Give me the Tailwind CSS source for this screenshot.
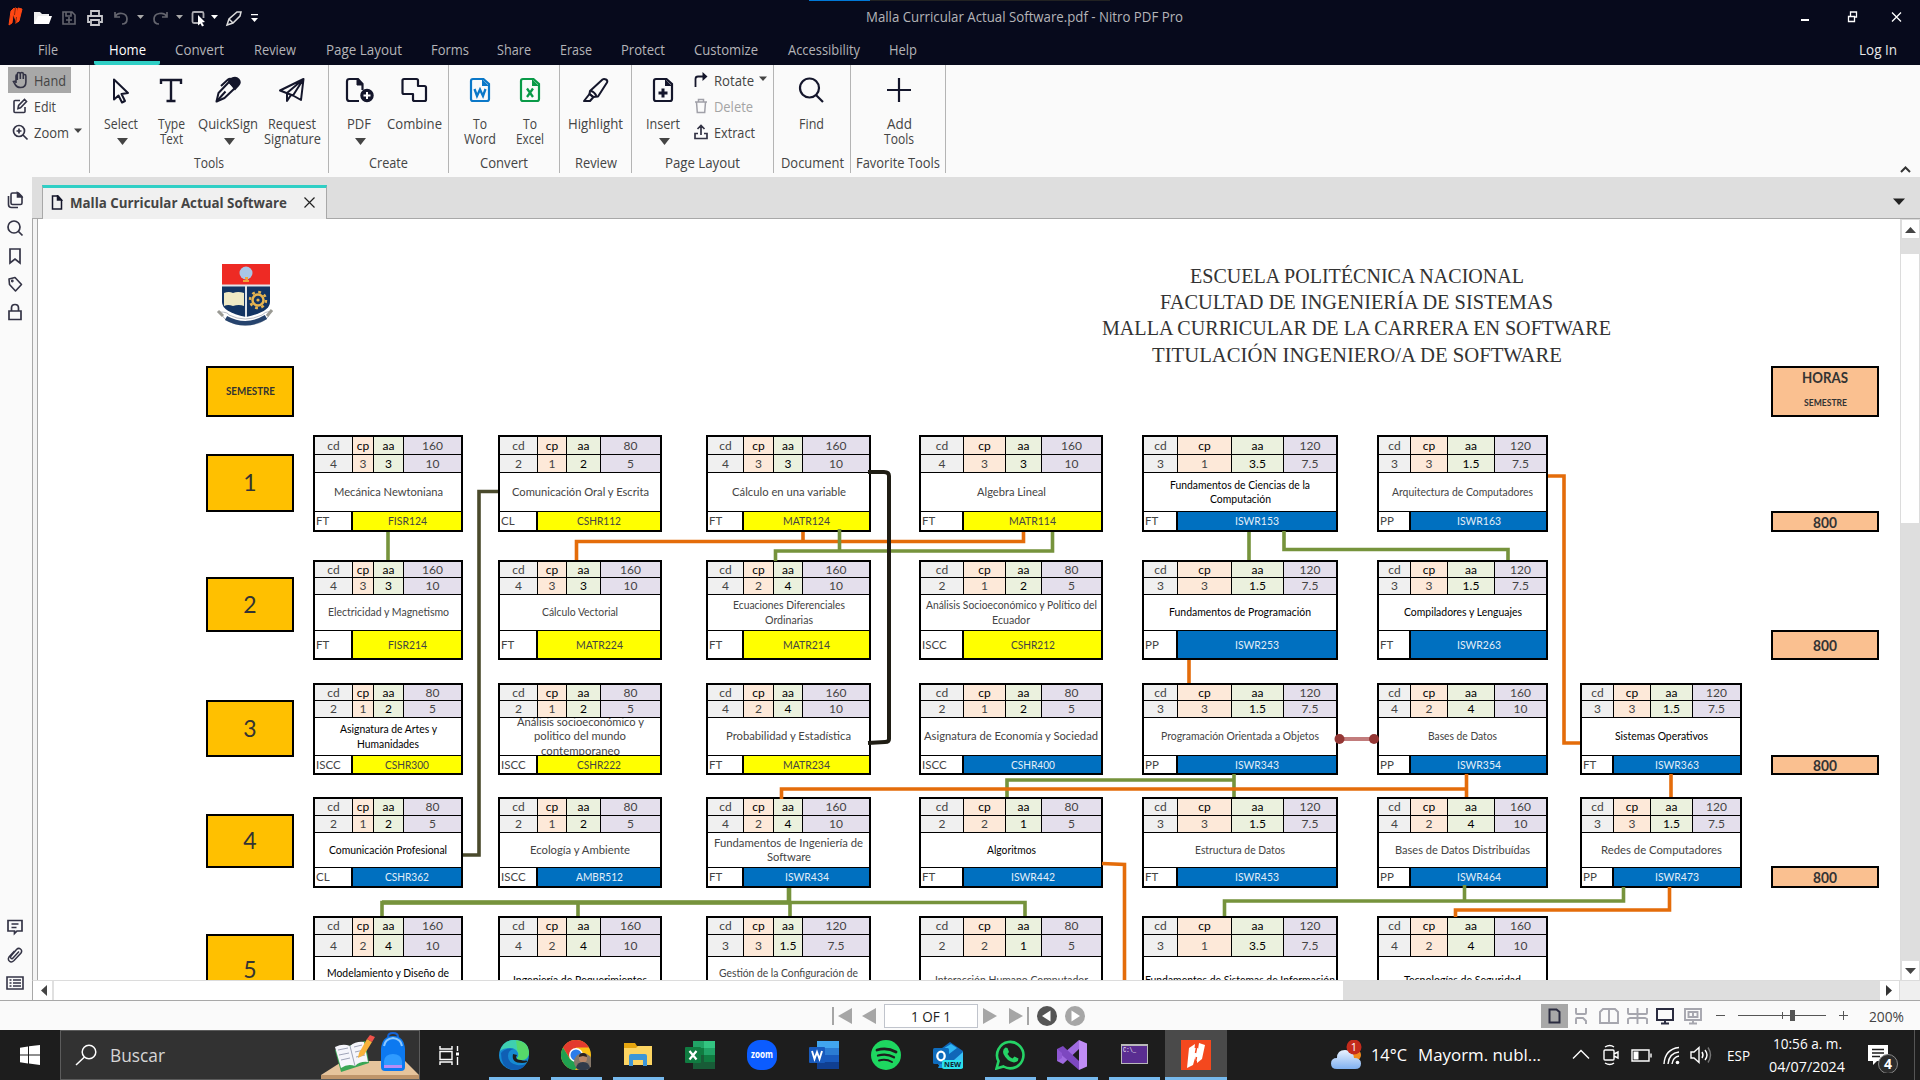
<!DOCTYPE html>
<html lang="es">
<head>
<meta charset="utf-8">
<title>Malla Curricular Actual Software.pdf - Nitro PDF Pro</title>
<script src="https://cdn.jsdelivr.net/npm/@tailwindcss/browser@4"></script>
</head>
<body class="w-[1920px] h-[1080px] overflow-hidden flex flex-col bg-[#fafafa] text-[#444] text-[14px] font-['Open_Sans','Noto_Sans',sans-serif] whitespace-nowrap">

<!-- Title bar -->
<header class="h-[65px] shrink-0 bg-[#070a1c] text-[#b4b4b8] flex flex-col relative">
  <div class="absolute left-[809px] top-0 h-px w-[61px] bg-[#0078d7]"></div>
  <div class="absolute left-[870px] top-0 h-px w-[240px] bg-[#222]"></div>
  <div class="h-[35px] flex items-center relative">
    <svg class="w-[270px] h-[35px]" viewBox="0 0 270 35" fill="none">
      <path d="M11 11l3-3-2 15-3 2zM18 8l4 1-3 12-3 2z" fill="#ff4713" stroke="#ff4713"/><path d="M14 8l3 0 2 14-3 0-3-7z" fill="#ff4713"/><path d="M15.500 7l-1 8M16.500 17l-1 7" stroke="#8a2408"/>
      <path d="M34 24V12h6l2 2h7v3" fill="#eee"/><path d="M34 24l4-8h14l-3 8z" fill="#fff"/>
      <g stroke="#64656e" stroke-width="1.6"><path d="M63 12h9l3 3v9H63zM66 12v4h5v-4M66 20h6M69 17v6"/></g>
      <g stroke="#c8c8cc" stroke-width="1.8"><path d="M91 15v-4h8v4M90 22h-2v-6h14v6h-2M91 20h8v5h-8z"/></g>
      <g stroke="#64656e" stroke-width="1.7"><path d="M115 12v5h5M115 17c3-6 12-4 12 2 0 3-2 5-5 5M167 12v5h-5M167 17c-3-6-13-4-13 2 0 3 2 5 5 5"/></g>
      <path d="M137 15h7l-3.500 4zM176 15h7l-3.500 4z" fill="#aaa"/>
      <path d="M198 23h-4a1.500 1.500 0 0 1-1.500-1.500v-8A1.500 1.500 0 0 1 194 12h8a1.500 1.500 0 0 1 1.500 1.500V18" stroke="#aaaab0" stroke-width="1.800"/><path d="M198 15l7 7-3 .5 2 3-2 1-1.500-3-2.500 2z" fill="#fff"/>
      <path d="M211 15h7l-3.500 4z" fill="#fff"/>
      <g stroke="#ddd" stroke-width="1.500"><path d="M227 25l2-6 8-7 4 0-1 4-7 7zM229 19l4 4"/></g>
      <path d="M251 14h7v1.200h-7zM251 18h7l-3.500 4z" fill="#fff"/>
    </svg>
    <div class="ml-[596px] mb-[2px]"><span data-w="317">Malla Curricular Actual Software.pdf - Nitro PDF Pro</span></div>
    <svg class="ml-auto w-[130px] h-[35px]" viewBox="0 0 130 35" fill="none" stroke="#fff">
      <path d="M11 20h8" stroke-width="2"/><path d="M58.500 16.500h6v5h-6zM60.500 16v-4h6v5h-2" stroke-width="1.300"/><path d="M102 12.500l9 9M111 12.500l-9 9" stroke-width="1.300"/>
    </svg>
  </div>
  <nav class="h-[30px] flex pl-[23px]">
    <div class="px-[14.5px] pt-[4px]"><span data-w="20">File</span></div>
    <div class="px-[14.5px] pt-[4px] ml-[22px] border-b-4 border-[#2fcfc5] rounded-b-[2px] text-white"><span data-w="37">Home</span></div>
    <div class="px-[14.5px] pt-[4px]"><span data-w="49">Convert</span></div>
    <div class="px-[14.5px] pt-[4px] ml-px"><span data-w="42">Review</span></div>
    <div class="px-[14.5px] pt-[4px] ml-px"><span data-w="76">Page Layout</span></div>
    <div class="px-[14.5px] pt-[4px]"><span data-w="38">Forms</span></div>
    <div class="px-[14.5px] pt-[4px] -ml-px"><span data-w="34">Share</span></div>
    <div class="px-[14.5px] pt-[4px]"><span data-w="32">Erase</span></div>
    <div class="px-[14.5px] pt-[4px]"><span data-w="44">Protect</span></div>
    <div class="px-[14.5px] pt-[4px]"><span data-w="64">Customize</span></div>
    <div class="px-[14.5px] pt-[4px] ml-px"><span data-w="72">Accessibility</span></div>
    <div class="px-[14.5px] pt-[4px]"><span data-w="28">Help</span></div>
    <div class="ml-auto mr-[23px] pt-[4px] text-[#e8e8e8]"><span data-w="38">Log In</span></div>
  </nav>
</header>

<!-- Ribbon -->
<section class="h-[112px] shrink-0 flex relative leading-[15px]">
  <div class="w-[89px] pl-[8px] pt-[2px] flex flex-col">
    <div class="w-[63px] h-[26px] bg-[#a8a8a8] flex items-center pl-[4px] gap-[5px]">
      <svg class="w-[17px] h-[18px]" viewBox="0 0 17 18" fill="none" stroke="#333345" stroke-width="1.600"><path d="M4 12V5q0-1.500 1.300-1.500M5.300 9V3q0-1.500 1.500-1.500T8.300 3v5M8.300 3q0-1.500 1.500-1.500T11.300 3v5M11.300 4.500q0-1 1.300-1t1.300 1.500v6q0 5.500-5.400 5.500Q5 16.500 3.500 14L1.500 10.500 3.800 10"/></svg><span data-w="32">Hand</span></div>
    <div class="h-[26px] flex items-center pl-[4px] gap-[5px]">
      <svg class="w-[17px] h-[18px]" viewBox="0 0 17 18" fill="none" stroke="#333345" stroke-width="1.600"><path d="M8 3.500H3Q2 3.500 2 4.500v10q0 1 1 1h9q1 0 1-1V10M6 11.500l.6-3L12.500 2.500l2 2-6 6.200z"/></svg><span data-w="22">Edit</span></div>
    <div class="h-[26px] flex items-center pl-[4px] gap-[5px]">
      <svg class="w-[17px] h-[18px]" viewBox="0 0 17 18" fill="none" stroke="#333345" stroke-width="1.700"><circle cx="7" cy="8" r="5.500"/><path d="M11 12l4.500 4.500M4.500 8h5M7 5.500v5"/></svg><span data-w="35">Zoom</span>
      <svg class="w-[8px] h-[5px] -mt-[3px]" viewBox="0 0 8 5"><path d="M0 .5h8L4 5z" fill="#444"/></svg></div>
  </div>

  <div class="w-px h-[108px] bg-[#b4b4b4]"></div>
  <div class="w-[238px] flex flex-col items-center">
    <div class="h-[90px] w-full pl-[4px] flex text-center">
      <div class="w-[53px] flex flex-col items-center pt-[10px]"><svg class="w-[30px] h-[30px] mb-[11px]" viewBox="0 0 30 30" fill="none" stroke="#14162b" stroke-width="2"><path d="M8 4.500v20l4.500-4 3.500 7 3-1.500-3.500-7 6.500-1z" stroke-linejoin="round"/></svg><span data-w="34">Select</span><svg class="w-[11px] h-[7px] mt-[7px] ml-[3px]" viewBox="0 0 11 7"><path d="M0 0h11L5.500 7z" fill="#444"/></svg></div>
      <div class="w-[48px] flex flex-col items-center pt-[10px]"><svg class="w-[30px] h-[30px] mb-[11px]" viewBox="0 0 30 30" fill="none" stroke="#14162b" stroke-width="2.400"><path d="M5 9V5h20v4M15 5v21M10.500 26h9"/></svg><span data-w="27">Type</span><span data-w="23">Text</span></div>
      <div class="w-[66px] flex flex-col items-center pt-[10px]"><svg class="w-[30px] h-[30px] mb-[11px]" viewBox="0 0 30 30" fill="none" stroke="#14162b" stroke-width="2"><path d="M3.500 26.500L5.500 18 16 7l6 6-10.500 10z" stroke-linejoin="round"/><path d="M3.500 26.500l9-10M8 11l7-6.500q2-1.500 4 0"/><path d="M16 6l3-2.500q4-2 6.500 1t0 5.500L22 14z" fill="#14162b"/></svg><span data-w="60">QuickSign</span><svg class="w-[11px] h-[7px] mt-[7px] ml-[2px]" viewBox="0 0 11 7"><path d="M0 0h11L5.500 7z" fill="#444"/></svg></div>
      <div class="w-[62px] flex flex-col items-center pt-[10px]"><svg class="w-[30px] h-[30px] mb-[11px]" viewBox="0 0 30 30" fill="none" stroke="#14162b" stroke-width="2" stroke-linejoin="round"><path d="M3 15.500L26.500 4 24 25l-8-4.500zM10 18L26.500 4 16 20.500M10 18v8l4-6"/></svg><span data-w="48">Request</span><span data-w="57">Signature</span></div>
    </div>
    <span data-w="30">Tools</span>
  </div>

  <div class="w-px h-[108px] bg-[#b4b4b4]"></div>
  <div class="w-[119px] flex flex-col items-center">
    <div class="h-[90px] w-full pl-[5px] flex">
      <div class="w-[50px] flex flex-col items-center pt-[10px]"><svg class="w-[30px] h-[30px] mb-[11px]" viewBox="0 0 30 30" fill="none" stroke="#14162b" stroke-width="2.200"><path d="M15 26H5.500Q3 26 3 23.500V6.500Q3 4 5.500 4H14l4.500 5v6"/><path d="M13 4l6 6h-6z" fill="#14162b" stroke-width="1"/><circle cx="23" cy="20.500" r="6" fill="#14162b" stroke-width="1.500"/><path d="M19.500 20.500h7M23 17v7" stroke="#fff" stroke-width="2"/></svg><span data-w="24">PDF</span><svg class="w-[11px] h-[7px] mt-[7px] ml-[3px]" viewBox="0 0 11 7"><path d="M0 0h11L5.500 7z" fill="#444"/></svg></div>
      <div class="w-[60px] flex flex-col items-center pt-[10px]"><svg class="w-[30px] h-[30px] mb-[11px]" viewBox="0 0 30 30" fill="none" stroke="#14162b" stroke-width="2.200" stroke-linejoin="round"><path d="M5 4h12.500q1.500 0 1.500 1.500V11h6.500Q27 11 27 12.500v12q0 1.500-1.500 1.500h-10q-1.500 0-1.500-1.500V19H5q-1.500 0-1.500-1.500v-12Q3.500 4 5 4z"/></svg><span data-w="55">Combine</span></div>
    </div>
    <span data-w="39">Create</span>
  </div>

  <div class="w-px h-[108px] bg-[#b4b4b4]"></div>
  <div class="w-[110px] flex flex-col items-center">
    <div class="h-[90px] w-full pl-[6px] flex">
      <div class="w-[50px] flex flex-col items-center pt-[10px]"><svg class="w-[30px] h-[30px] mb-[11px]" viewBox="0 0 30 30" fill="none" stroke="#0b78c8" stroke-width="2.200"><path d="M8 4h10.500L24 9v15q0 2-2 2H8q-2 0-2-2V6q0-2 2-2z"/><path d="M17 4l7 7h-7z" fill="#0b78c8" stroke="none"/><path d="M9.500 14l2.500 7 3-6.500 3 6.500 2.500-7" stroke-width="2.300"/></svg><span data-w="14">To</span><span data-w="32">Word</span></div>
      <div class="w-[50px] flex flex-col items-center pt-[10px]"><svg class="w-[30px] h-[30px] mb-[11px]" viewBox="0 0 30 30" fill="none" stroke="#0a9a48" stroke-width="2.200"><path d="M8 4h10.500L24 9v15q0 2-2 2H8q-2 0-2-2V6q0-2 2-2z"/><path d="M17 4l7 7h-7z" fill="#0a9a48" stroke="none"/><path d="M12 13.500l6 8.500M18 13.500L12 22" stroke-width="2.300"/></svg><span data-w="14">To</span><span data-w="28">Excel</span></div>
    </div>
    <span data-w="48">Convert</span>
  </div>

  <div class="w-px h-[108px] bg-[#b4b4b4]"></div>
  <div class="w-[71px] flex flex-col items-center">
    <div class="h-[90px] flex flex-col items-center pt-[10px]"><svg class="w-[30px] h-[30px] mb-[11px]" viewBox="0 0 30 30" fill="none" stroke="#14162b" stroke-width="2" stroke-linejoin="round"><path d="M9 16L21.500 4.500q1.500-1 3.500 0t1 3L17 21.500l-5 .5-3.500-3z"/><path d="M10 16q3 .5 5.500 5M8.500 19L3 26h6l3.500-4z"/></svg><span data-w="55">Highlight</span></div>
    <span data-w="42">Review</span>
  </div>

  <div class="w-px h-[108px] bg-[#b4b4b4]"></div>
  <div class="w-[141px] flex flex-col items-center">
    <div class="h-[90px] w-full pl-[6px] flex">
      <div class="w-[50px] flex flex-col items-center pt-[10px]"><svg class="w-[30px] h-[30px] mb-[11px]" viewBox="0 0 30 30" fill="none" stroke="#14162b" stroke-width="2.200"><path d="M8 4h10.500L24 9v15q0 2-2 2H8q-2 0-2-2V6q0-2 2-2z"/><path d="M17 4l7 7h-7z" fill="#14162b" stroke="none"/><path d="M10.500 18h9M15 13.500v9" stroke-width="3"/></svg><span data-w="34">Insert</span><svg class="w-[11px] h-[7px] mt-[7px] ml-[3px]" viewBox="0 0 11 7"><path d="M0 0h11L5.500 7z" fill="#444"/></svg></div>
      <div class="flex flex-col pt-[2px] pl-[5px]">
        <div class="h-[26px] flex items-center gap-[5px]"><svg class="w-[16px] h-[16px]" viewBox="0 0 16 16" fill="none" stroke="#14162b" stroke-width="1.800"><path d="M2.500 15V7q0-2.500 2.500-2.500h5"/><path d="M9.500 0l5 4.500-5 4.500z" fill="#14162b" stroke="none"/></svg><span data-w="40">Rotate</span><svg class="w-[8px] h-[5px] -mt-[3px]" viewBox="0 0 8 5"><path d="M0 .5h8L4 5z" fill="#444"/></svg></div>
        <div class="h-[26px] flex items-center gap-[5px] text-[#a4a4a4]"><svg class="w-[16px] h-[16px]" viewBox="0 0 16 16" fill="none" stroke="#a0a0a8" stroke-width="1.500"><path d="M2 4h12M5.500 4V1.500h5V4M3.500 4l.8 10.500h7.400L12.500 4"/></svg><span data-w="39">Delete</span></div>
        <div class="h-[26px] flex items-center gap-[5px]"><svg class="w-[16px] h-[16px]" viewBox="0 0 16 16" fill="none" stroke="#333345" stroke-width="1.700"><path d="M8 11V1.500M4.500 5L8 1.500 11.500 5M5 9.500H2v5h12v-5h-3"/></svg><span data-w="41">Extract</span></div>
      </div>
    </div>
    <span data-w="75">Page Layout</span>
  </div>

  <div class="w-px h-[108px] bg-[#b4b4b4]"></div>
  <div class="w-[76px] flex flex-col items-center">
    <div class="h-[90px] flex flex-col items-center pt-[10px] pr-[2px]"><svg class="w-[30px] h-[30px] mb-[11px]" viewBox="0 0 30 30" fill="none" stroke="#14162b" stroke-width="2.200"><circle cx="13.500" cy="13" r="9.500"/><path d="M20 20l7 7"/></svg><span data-w="25">Find</span></div>
    <span data-w="63">Document</span>
  </div>

  <div class="w-px h-[108px] bg-[#b4b4b4]"></div>
  <div class="w-[94px] flex flex-col items-center">
    <div class="h-[90px] flex flex-col items-center pt-[10px] pl-[2px]"><svg class="w-[30px] h-[30px] mb-[11px]" viewBox="0 0 30 30" stroke="#14162b" stroke-width="2.200"><path d="M3 15h24M15 3v24"/></svg><span data-w="25">Add</span><span data-w="30">Tools</span></div>
    <span data-w="84">Favorite Tools</span>
  </div>
  <div class="w-px h-[108px] bg-[#b4b4b4]"></div>
  <svg class="ml-auto mr-[9px] mt-[101px] w-[11px] h-[7px]" viewBox="0 0 11 7" fill="none" stroke="#333" stroke-width="2"><path d="M1 6l4.500-4.500L10 6"/></svg>
</section>

<!-- Work area -->
<main class="h-[823px] shrink-0 flex">
  <aside class="w-[32px] flex flex-col items-center pt-[14px] text-[#333345]">
    <div class="flex flex-col gap-[10px] pr-[3px]">
      <svg class="w-[18px] h-[18px]" viewBox="0 0 18 18" fill="none" stroke="currentColor" stroke-width="1.600"><path d="M6.500 2h6L16 5.500V12q0 1.500-1.500 1.500h-8Q5 13.500 5 12V3.500Q5 2 6.500 2z"/><path d="M11.500 2v4h4z" fill="currentColor"/><path d="M2.500 5v8.500q0 3 3 3H12"/></svg>
      <svg class="w-[18px] h-[18px]" viewBox="0 0 18 18" fill="none" stroke="currentColor" stroke-width="1.700"><circle cx="8" cy="8" r="6"/><path d="M12 12l4.500 4.500"/></svg>
      <svg class="w-[18px] h-[18px]" viewBox="0 0 18 18" fill="none" stroke="currentColor" stroke-width="1.700"><path d="M4 2h10v14l-5-4-5 4z"/></svg>
      <svg class="w-[18px] h-[18px]" viewBox="0 0 18 18" fill="none" stroke="currentColor" stroke-width="1.600" stroke-linejoin="round"><path d="M3 4l6-1.500 6.500 7-6 6.500L3.500 9.500z"/><circle cx="6.300" cy="6" r=".6"/></svg>
      <svg class="w-[18px] h-[18px]" viewBox="0 0 18 18" fill="none" stroke="currentColor" stroke-width="1.700"><path d="M3 8h12v8.500H3zM5.500 8V5q0-3.500 3.500-3.500T12.500 5v3"/></svg>
    </div>
    <div class="flex flex-col gap-[10px] mt-auto mb-[8px] pr-[2px]">
      <svg class="w-[18px] h-[18px]" viewBox="0 0 18 18" fill="none" stroke="currentColor" stroke-width="1.700"><path d="M2 2.500h14v10.500H11L8.500 15.500V13H2zM5.500 6h7M5.500 9.500h5"/></svg>
      <svg class="w-[18px] h-[18px]" viewBox="0 0 18 18" fill="none" stroke="currentColor" stroke-width="1.500"><path d="M13 5.500L7 12q-1 1.200-2 .3t0-2.300L10.500 3.500q2-2 4-.5t.5 4L8 14.500q-2.500 2.500-4.500.8T3 11L8.500 5"/></svg>
      <svg class="w-[18px] h-[18px]" viewBox="0 0 18 18" fill="none" stroke="currentColor" stroke-width="1.600"><path d="M1 3h16v12H1zM7 6h8M7 9h8M7 12h8M3.500 6h2M3.500 9h2M3.500 12h2"/></svg>
    </div>
  </aside>

  <div class="w-[1888px] flex flex-col">
    <div class="h-[42px] bg-[#dedede] border-b border-[#a8a8a8] flex items-end pl-[10px]">
      <div class="w-[285px] h-[34px] -mb-px bg-[#f0f0f0] border-x border-x-[#a8a8a8] border-t-[3px] border-t-[#2fcfc5] flex items-center pl-[8px] pb-[2px]">
        <svg class="w-[12px] h-[15px]" viewBox="0 0 12 15" fill="none" stroke="#14162b" stroke-width="1.500"><path d="M1.500 1H7l3.500 4v9h-9z"/><path d="M6.500 1v4h4z" fill="#14162b"/></svg>
        <b class="ml-[7px] font-bold"><span data-w="217">Malla Curricular Actual Software</span></b>
        <svg class="ml-[17px] w-[11px] h-[11px]" viewBox="0 0 11 11" stroke="#222" stroke-width="1.200"><path d="M.5.5l10 10M10.500.5l-10 10"/></svg>
      </div>
      <svg class="ml-auto mr-[15px] mb-[13px] w-[12px] h-[7px]" viewBox="0 0 12 7"><path d="M0 .5h12L6 7z" fill="#222"/></svg>
    </div>

    <div class="h-[761px] flex">
      <div class="w-[6px] bg-[#f4f4f4] border-x border-[#a8a8a8]"></div>
      <!-- Page canvas -->
      <div id="page" class="w-[1862px] relative overflow-hidden bg-white font-[Lato,'Open_Sans',sans-serif] text-[12px]">
        <div id="layer" class="absolute -left-[38px] -top-[219px] w-[1900px] h-[1100px]">
          <svg class="absolute left-[215px] top-[262px] w-[62px] h-[64px]" viewBox="0 0 62 64" fill="none">
            <path d="M7 2h48v21H7z" fill="#ee2a24"/><path d="M7 24h48v16q0 10-24 15Q7 50 7 40z" fill="#123463"/>
            <path d="M31 23v32M7 23.500h48" stroke="#dfe4ea" stroke-width="2"/><circle cx="31" cy="11" r="6.500" fill="#a9c6e6"/><path d="M28 19h6M30 16h2v4" stroke="#f2a33a" stroke-width="2"/>
            <path d="M9 31q5-2 9 0 5-2 11 0v13q-5-2-11 0-5-2-9 0z" fill="#efe9c4"/>
            <circle cx="43" cy="38" r="5.500" stroke="#e6b450" stroke-width="2.500"/><circle cx="43" cy="38" r="8" stroke="#e6b450" stroke-width="2.500" stroke-dasharray="2.800 3.480"/><circle cx="43" cy="38" r="1.600" fill="#e6b450"/>
            <path d="M5 50q8 0 9 3 16 8 33 0 2-3 9-4l-3 6q-7 8-22 8T9 56z" fill="#fff" stroke="#b8bcc4"/><path d="M11 56q20 11 40-1" stroke="#26436d" stroke-width="4.500"/><path d="M3 49l5 5M57 48l-5 6" stroke="#9a9a94" stroke-width="3"/>
          </svg>
          <div class="absolute left-[1056px] top-[262.5px] w-[601px] text-center text-[22px] leading-[26.4px] text-[#333] font-['Liberation_Serif',serif]">
            <div><span data-w="334">ESCUELA POLITÉCNICA NACIONAL</span></div>
            <div><span data-w="393">FACULTAD DE INGENIERÍA DE SISTEMAS</span></div>
            <div><span data-w="509">MALLA CURRICULAR DE LA CARRERA EN SOFTWARE</span></div>
            <div><span data-w="410">TITULACIÓN INGENIERO/A DE SOFTWARE</span></div>
          </div>
          <div class="absolute left-[206px] top-[366px] w-[88px] h-[51px] border-2 border-black bg-[#ffc000] text-[#333] flex items-center justify-center font-bold text-[11px]"><span data-w="49">SEMESTRE</span></div>
          <div class="absolute left-[1771px] top-[366px] w-[108px] h-[51px] border-2 border-black bg-[#fac090] text-[#333] flex flex-col items-center font-bold text-[15px] leading-[19px]"><span data-w="46">HORAS</span><div class="mt-[6px] text-[10px]"><span data-w="43">SEMESTRE</span></div></div>
        </div>
      </div>
      <!-- Vertical scroll bar -->
      <div class="w-[20px] bg-[#dedede] flex flex-col border-l border-[#dcdcdc]">
        <div class="h-[20px] bg-white border border-[#dcdcdc] flex items-center justify-center pt-[2px]"><svg class="w-[11px] h-[6px]" viewBox="0 0 11 6"><path d="M0 6h11L5.500 0z" fill="#444"/></svg></div>
        <div class="h-[15px]"></div>
        <div class="h-[269px] bg-white border-r border-[#dcdcdc]"></div>
        <div class="h-[19px] mt-auto bg-white border-x border-[#dcdcdc] flex items-center justify-center"><svg class="w-[11px] h-[6px]" viewBox="0 0 11 6"><path d="M0 0h11L5.500 6z" fill="#444"/></svg></div>
      </div>
    </div>
    <!-- Horizontal scroll bar -->
    <div class="h-[20px] bg-[#dedede] flex border-t border-[#dcdcdc] border-l border-l-[#a8a8a8]">
      <div class="w-[21px] bg-white border-r-2 border-[#e0e0e0] flex items-center justify-center pl-[2px]"><svg class="w-[6px] h-[11px]" viewBox="0 0 6 11"><path d="M6 0v11L0 5.500z" fill="#444"/></svg></div>
      <div class="w-[1289px] bg-white"></div>
      <div class="ml-auto w-[19px] bg-white flex items-center justify-center pr-[2px]"><svg class="w-[6px] h-[11px]" viewBox="0 0 6 11"><path d="M0 0v11l6-5.500z" fill="#333"/></svg></div>
      <div class="w-[21px] bg-[#efefef] border-l border-[#dcdcdc]"></div>
    </div>
  </div>
</main>

<!-- Status bar -->
<div class="h-[30px] shrink-0 border-t border-[#a8a8a8] flex items-center">
  <svg class="ml-[832px] w-[46px] h-[18px]" viewBox="0 0 46 18" fill="#a6a6a6"><path d="M0 0h2v18H0zM20 1v16L6 9zM44 1v16L30 9z"/></svg>
  <div class="ml-[6px] w-[94px] h-[24px] border border-[#c0c4cc] bg-white flex items-center justify-center text-[#222] pt-[2px]"><span data-w="40">1 OF 1</span></div>
  <svg class="ml-[5px] w-[104px] h-[22px]" viewBox="0 0 104 22" fill="#a6a6a6"><path d="M0 3v16l14-8zM26 3v16l14-8zM44 2h2v18h-2z"/><circle cx="64" cy="11" r="10" fill="#555"/><path d="M67.500 5.500v11L59 11z" fill="#fff"/><circle cx="92" cy="11" r="10"/><path d="M88.500 5.500v11L97 11z" fill="#fff"/></svg>
  <div class="ml-auto w-[27px] h-[24px] bg-[#a8a8a8] flex items-center justify-center"><svg class="w-[13px] h-[16px]" viewBox="0 0 13 16" fill="none" stroke="#2b2c40" stroke-width="2"><path d="M1.500 1.500h7L11.500 4v10.500h-10z"/></svg></div>
  <svg class="w-[140px] h-[20px]" viewBox="0 0 140 20" fill="none" stroke="#a6a6ae" stroke-width="1.900">
    <path d="M8 2v5q0 1 1 1h8q1 0 1-1V2M8 18v-5q0-1 1-1h6l3 3v3"/>
    <path d="M35 3h6v14h-9V6zM41 3h6l3 3v11h-9z"/>
    <path d="M60 2v5q0 1 1 1h17q1 0 1-1V2M60 18v-5l2-1h15l2 1v5M69.500 2v16"/>
    <path d="M89 3h16v11H89zM93 17.500h8M97 14v3" stroke="#2b2c40" stroke-width="2"/>
    <path d="M117 3h16v11h-16zM121 17.500h8M125 14v3M120.500 6h9v5h-9zM125 6v5"/>
  </svg>
  <svg class="ml-[7px] w-[138px] h-[20px]" viewBox="0 0 138 20" fill="none" stroke="#555"><path d="M1 9.500h9M23 9.500h88M124 9.500h9M128.500 5v9M67.500 6v7"/><path d="M75 4h5v11h-5z" fill="#555" stroke="none"/></svg>
  <div class="ml-[16px] mr-[16px] w-[35px] pt-[2px]"><span data-w="35">200%</span></div>
</div>

<!-- Taskbar -->
<footer class="h-[50px] shrink-0 bg-[#1d1d1d] text-white flex items-center">
  <div class="w-[60px] shrink-0 flex justify-center"><svg class="w-[20px] h-[20px]" viewBox="0 0 20 20" fill="#fff"><path d="M0 2.700l8-1.200v8H0zM9 1.300L20 0v9.500H9zM0 10.500h8v8l-8-1.200zM9 10.500h11V20L9 18.600z"/></svg></div>
  <div class="w-[360px] shrink-0 h-[50px] bg-[#323232] border border-[#5c5c5c] flex items-center pl-[14px] relative">
    <svg class="w-[22px] h-[22px]" viewBox="0 0 22 22" fill="none" stroke="#fff" stroke-width="1.500"><circle cx="14" cy="8" r="6.800"/><path d="M9.500 13L1 21"/></svg>
    <div class="ml-[13px] text-[18px] text-[#d6d6d6]"><span data-w="55">Buscar</span></div>
    <svg class="absolute right-0 bottom-0 w-[98px] h-[48px]" viewBox="0 0 98 48" fill="none">
      <path d="M0 44L22 30h62l14 14z" fill="#e6c49c"/><path d="M0 44h98v4H0z" fill="#bf956a"/>
      <g transform="translate(0,-1)"><path d="M14 20l30-9 4 22-28 9z" fill="#3aa655"/><path d="M14 17q8-4 15-1 6-5 14-4l4 20q-8-1-13 4-7-3-14 2z" fill="#f5f5fb"/><path d="M29 16l5 20M17 20l10-2M18 25l10-2M20 30l9-2M33 17l8-2M34 22l9-2M35 27l9-2" stroke="#9fa4b8"/><path d="M38 23l8-14 5 3-8 13-6 3z" fill="#f7b23b"/><path d="M46 9l3-4 5 2-3 5z" fill="#f0524a"/></g>
      <path d="M67 6q0-4 5-4t5 4" stroke="#1563d6" stroke-width="2"/><path d="M60 36V18Q61 5 72 5t12 13v18q0 4-4 4H64q-4 0-4-4z" fill="#0c79f0"/><path d="M63 15q1-7 9-8 8 1 9 8" stroke="#8cc8ff" stroke-width="2"/><path d="M63 30q1-7 9-7t9 7v6H63z" fill="#2f9bff"/><path d="M63 34h18v3H63z" fill="#b98cf5"/>
    </svg>
  </div>
  <div class="w-[63px] shrink-0 pl-[19px]"><svg class="w-[21px] h-[21px]" viewBox="0 0 21 21" fill="none" stroke="#fff" stroke-width="1.400"><path d="M1 1v3h12V1M1 6.500h12v8H1zM1 20v-3h12v3M18.500 1v5M18.500 12v8"/><path d="M17 7.500h3v3h-3z" fill="#fff" stroke="none"/></svg></div>
  <div class="flex h-[50px]">
    <div class="w-[62px] flex flex-col items-center justify-between pt-[10px]"><svg class="w-[30px] h-[30px]" viewBox="0 0 30 30"><circle cx="15" cy="15" r="15" fill="#168bd2"/><path d="M1 11Q4 0 15 0q14 0 15 12 0 7-7 8-5 0-5-2 2-2 1-5-2-5-8-5Q4 8 1 11z" fill="#3fd0b0"/><path d="M17 .2Q29 1.500 30 12q0 7-7 8-5 0-5-2 3-3 .5-7z" fill="#56d86a"/><path d="M9 16q0-6 6-7-8-2-13 4 0 17 14 17 7 0 11-6-5 2-9 1-9-2-9-9z" fill="#0f5fb4"/><path d="M14 14q-2 9 9 9 3 0 5-1 .5-.5-.5-1.500Q24 21 22 20q-5 0-5-3l1-2z" fill="#1d1d1d"/></svg><i class="w-[51px] h-[3px] bg-[#76b9ed]"></i></div>
    <div class="w-[62px] flex flex-col items-center justify-between pt-[10px]"><svg class="w-[30px] h-[30px]" viewBox="0 0 30 30"><circle cx="15" cy="15" r="15" fill="#fbc116"/><path d="M2 7.500A15 15 0 0 1 28 7.500H15L8.500 18z" fill="#e33b2e"/><path d="M2 7.500A15 15 0 0 0 14 30l6.500-11L9 19z" fill="#20a050"/><circle cx="15" cy="15" r="7" fill="#fff"/><circle cx="15" cy="15" r="5.500" fill="#2b7de9"/><circle cx="22" cy="22" r="9" fill="#857769"/><circle cx="22" cy="18.500" r="4" fill="#b98768"/><path d="M18 17q0-4 4-4t4 4l-4-1z" fill="#2a2320"/><path d="M15 28q1-6 7-6t7 6q-7 5-14 0z" fill="#303b4a"/></svg><i class="w-[51px] h-[3px] bg-[#76b9ed]"></i></div>
    <div class="w-[62px] flex flex-col items-center justify-between pt-[12px]"><svg class="w-[28px] h-[24px]" viewBox="0 0 28 24"><path d="M0 1h11l2 3h15v18H0z" fill="#e5a50f"/><path d="M0 6h12l2-2h14v19H0z" fill="#fcd462"/><path d="M5 24V14q0-2 2-2h14q2 0 2 2v10h-4v-6H9v6z" fill="#3d96d8"/></svg><i class="w-[51px] h-[3px] bg-[#76b9ed]"></i></div>
    <div class="w-[62px] flex flex-col items-center pt-[10px]"><svg class="w-[30px] h-[30px]" viewBox="0 0 30 30"><path d="M8 1h11v7H8z" fill="#21a366"/><path d="M19 1h11v7H19z" fill="#33c481"/><path d="M8 8h11v7H8z" fill="#107c41"/><path d="M19 8h11v7H19z" fill="#21a366"/><path d="M8 15h22v14H8z" fill="#185c37"/><path d="M19 15h11v7H19z" fill="#107c41"/><rect y="7" width="16" height="16" rx="1" fill="#107c41"/><path d="M4.500 11l7 8.500M11.500 11l-7 8.500" stroke="#fff" stroke-width="2.200"/></svg></div>
    <div class="w-[62px] flex flex-col items-center pt-[10px]"><div class="w-[30px] h-[30px] rounded-[13px] bg-[#0b5cff] flex items-center justify-center text-[10px] leading-[12px] font-bold"><span class="-mt-[3px]" data-w="22">zoom</span></div></div>
    <div class="w-[62px] flex flex-col items-center pt-[10px]"><svg class="w-[30px] h-[30px]" viewBox="0 0 30 30"><path d="M8 1h22v7H8z" fill="#41a5ee"/><path d="M8 8h22v7H8z" fill="#2b7cd3"/><path d="M8 15h22v7H8z" fill="#185abd"/><path d="M8 22h22v7H8z" fill="#103f91"/><rect y="7" width="16" height="16" rx="1" fill="#185abd"/><path d="M3 11l2.500 8L8 12l2.500 7L13 11" fill="none" stroke="#fff" stroke-width="1.900"/></svg></div>
    <div class="w-[62px] flex flex-col items-center pt-[10px]"><svg class="w-[30px] h-[30px]" viewBox="0 0 30 30" fill="none" stroke="#1d1d1d" stroke-linecap="round"><circle cx="15" cy="15" r="15" fill="#1ed760" stroke="none"/><path d="M6 10q10-3 19 2" stroke-width="2.800"/><path d="M7 15.500q9-2.500 16 1.800" stroke-width="2.300"/><path d="M8 20.500q7-2 13 1.500" stroke-width="1.900"/></svg></div>
    <div class="w-[62px] flex flex-col items-center pt-[11px]"><div class="relative w-[30px] h-[30px]"><svg class="w-[30px] h-[30px]" viewBox="0 0 30 30"><path d="M5 10L17 1l13 9v14H5z" fill="#1066b8"/><path d="M8 9l10-6 6 4-12 9z" fill="#2fb6f4"/><path d="M12 27l18-16v16z" fill="#39c3f7"/><path d="M10 15l10 6-8 6H5z" fill="#1490df"/><rect y="7" width="16" height="16" rx="1.500" fill="#0f6cbd"/><ellipse cx="8" cy="15" rx="3.700" ry="4.300" fill="none" stroke="#fff" stroke-width="2.300"/></svg><div class="absolute left-[9px] top-[19px] w-[21px] h-[9px] rounded-[2px] bg-[#2be0ea] text-[#123] text-[7.500px] leading-[9px] font-bold text-center"><span data-w="17">NEW</span></div></div></div>
    <div class="w-[62px] flex flex-col items-center justify-between pt-[10px]"><svg class="w-[30px] h-[30px]" viewBox="0 0 30 30"><path d="M1.500 28.500l2-7.300A13.200 13.200 0 1 1 8.500 26.500z" fill="none" stroke="#25d366" stroke-width="2.600"/><path d="M10.500 7.500L12.500 8l1.500 4-1.500 2q2 3.500 5 4.500l2-2 4 2q0 3.500-4.500 4Q12 21.500 8.500 14q-1.500-4.500 2-6.500z" fill="#25d366"/></svg><i class="w-[51px] h-[3px] bg-[#76b9ed]"></i></div>
    <div class="w-[62px] flex flex-col items-center justify-between pt-[10px]"><svg class="w-[30px] h-[30px]" viewBox="0 0 30 30"><path d="M22 0l8 3.500v23L22 30z" fill="#c08cf5"/><path d="M22 0v9L6 24l-6-3v-2z" fill="#a06be0"/><path d="M22 30v-9L6 6 0 9v2z" fill="#7d48c0"/><path d="M0 9l5 4v5l-5 3z" fill="#8f57d2"/></svg><i class="w-[51px] h-[3px] bg-[#76b9ed]"></i></div>
    <div class="w-[62px] flex flex-col items-center justify-between pt-[14px]"><div class="w-[27px] h-[20px] bg-[#5a2d91] border border-[#b9b9b9] border-t-2 font-['Liberation_Mono',monospace] text-[7px] leading-[8px] pl-px"><span data-w="13">C:\_</span></div><i class="w-[51px] h-[3px] bg-[#76b9ed]"></i></div>
    <div class="w-[62px] bg-[#4a4a4a] flex flex-col items-center justify-between pt-[10px]"><svg class="w-[30px] h-[30px]" viewBox="0 0 30 30"><path d="M0 0h30v30H0z" fill="#f4481e"/><path d="M8 8l6-4-1 9 1 5-2 7-6 3zM18 3l6 2-3 14-5 4 0-7z" fill="#fff"/><path d="M13 8l4 0 1 12-3 1-3-6z" fill="#fff"/><path d="M16.500 3l-2 10M15.500 17l-2 10" stroke="#f4481e" stroke-width="1.500"/></svg><i class="w-full h-[3px] bg-[#76b9ed]"></i></div>
  </div>
  <svg class="ml-[103px] w-[32px] h-[30px]" viewBox="0 0 32 30"><defs><linearGradient id="cl" x2="0" y2="1"><stop stop-color="#e9f2ff"/><stop offset="1" stop-color="#7fb0f0"/></linearGradient></defs><circle cx="25" cy="15" r="6" fill="#f08a1c"/><path d="M7 29q-6 0-6-5.500T7 18q0-8 8-8t9 8q7 0 7 5.500T25 29z" fill="url(#cl)"/><circle cx="24" cy="7" r="7.500" fill="#c42b1c"/><text x="24" y="11" text-anchor="middle" font-size="11" fill="#fff" font-family="Open Sans">1</text></svg>
  <div class="ml-[9px] text-[17px]"><span data-w="36">14°C</span></div>
  <div class="ml-[11px] text-[17px]"><span data-w="123">Mayorm. nubl...</span></div>
  <svg class="ml-[31px] w-[142px] h-[24px]" viewBox="0 0 142 24" fill="none" stroke="#fff" stroke-width="1.400">
    <path d="M1 15.500l8-8 8 8"/>
    <path d="M33 7h8q1 0 1 1v8q0 1-1 1h-8q-1 0-1-1V8q0-1 1-1zM42 11l4-2v6l-4-2M33 4q5-3 9 0M33 20q5 3 9 0"/>
    <path d="M60 7h17v11H60zM79 10.500v4"/><path d="M61.500 8.500h5v8h-5z" fill="#fff" stroke="none"/>
    <path d="M92 21Q93 6 107 4.500M96 21q1-11 11-12M100 21q1-7 7-8"/><circle cx="105.500" cy="19.500" r="1.800" fill="#fff" stroke="none"/>
    <path d="M119 9h3l5-4.500v15L122 15h-3zM130 9q2 3 0 6M133 7q4 5 0 10"/><path d="M136 4.500q5 7.500 0 15" stroke="#777"/>
  </svg>
  <div class="ml-[13px]"><span data-w="23">ESP</span></div>
  <div class="ml-[19px] w-[76px] flex flex-col items-center leading-[23px]"><span data-w="69">10:56 a. m.</span><span data-w="76">04/07/2024</span></div>
  <div class="ml-[22px] w-[34px] h-[36px] relative"><svg class="w-[34px] h-[36px]" viewBox="0 0 34 36"><path d="M1 8h20v16H10l-4 4v-4H1z" fill="#fff"/><path d="M5 12.500h12M5 16h12M5 19.500h8" stroke="#1d1d1d" stroke-width="1.300"/><circle cx="21" cy="27" r="9.500" fill="#2c2c2c" stroke="#888"/></svg><div class="absolute left-[11px] top-[17px] w-[20px] text-center leading-[20px] font-bold">4</div></div>
  <div class="ml-auto mr-[5px] w-px h-[50px] bg-[#555]"></div>
</footer>

<script>
// Column edges: left, three dividers, right.
const cols = [
  [313,352,373,403,463],[498,537,566,600,662],[706,743,773,802,871],[919,963,1005,1041,1103],
  [1142,1177,1231,1283,1338],[1377,1410,1447,1494,1548],[1580,1613,1650,1692,1742]];
// Row edges: top, after header, after values, after name, bottom.
const rows = [[435,454,472,511,532],[560,577,594,630,660],[683,700,717,755,775],[797,815,832,867,888],[916,934,956,1004,1026]];
// [column, cd, cp, aa, hours, credits, type, code, yellow, dark title, [line, width]...]
const data = [
 [[0,4,3,3,160,10,'FT','FISR124',1,0,['Mecánica Newtoniana',109]],
  [1,2,1,2,80,5,'CL','CSHR112',1,0,['Comunicación Oral y Escrita',137]],
  [2,4,3,3,160,10,'FT','MATR124',1,0,['Cálculo en una variable',114]],
  [3,4,3,3,160,10,'FT','MATR114',1,0,['Algebra Lineal',69]],
  [4,3,1,3.5,120,7.5,'FT','ISWR153',0,1,['Fundamentos de Ciencias de la',140],['Computación',61]],
  [5,3,3,1.5,120,7.5,'PP','ISWR163',0,0,['Arquitectura de Computadores',141]]],
 [[0,4,3,3,160,10,'FT','FISR214',1,0,['Electricidad y Magnetismo',121]],
  [1,4,3,3,160,10,'FT','MATR224',1,0,['Cálculo Vectorial',76]],
  [2,4,2,4,160,10,'FT','MATR214',1,0,['Ecuaciones Diferenciales',112],['Ordinarias',48]],
  [3,2,1,2,80,5,'ISCC','CSHR212',1,0,['Análisis Socioeconómico y Político del',171],['Ecuador',38]],
  [4,3,3,1.5,120,7.5,'PP','ISWR253',0,1,['Fundamentos de Programación',142]],
  [5,3,3,1.5,120,7.5,'FT','ISWR263',0,1,['Compiladores y Lenguajes',118]]],
 [[0,2,1,2,80,5,'ISCC','CSHR300',1,1,['Asignatura de Artes y',97],['Humanidades',62]],
  [1,2,1,2,80,5,'ISCC','CSHR222',1,0,['Análisis socioeconómico y',127],['politico del mundo',92],['contemporaneo',79]],
  [2,4,2,4,160,10,'FT','MATR234',1,0,['Probabilidad y Estadística',125]],
  [3,2,1,2,80,5,'ISCC','CSHR400',0,0,['Asignatura de Economía y Sociedad',174]],
  [4,3,3,1.5,120,7.5,'PP','ISWR343',0,0,['Programación Orientada a Objetos',158]],
  [5,4,2,4,160,10,'PP','ISWR354',0,0,['Bases de Datos',69]],
  [6,3,3,1.5,120,7.5,'FT','ISWR363',0,1,['Sistemas Operativos',93]]],
 [[0,2,1,2,80,5,'CL','CSHR362',0,1,['Comunicación Profesional',118]],
  [1,2,1,2,80,5,'ISCC','AMBR512',0,0,['Ecología y Ambiente',100]],
  [2,4,2,4,160,10,'FT','ISWR434',0,0,['Fundamentos de Ingeniería de',149],['Software',44]],
  [3,2,2,1,80,5,'FT','ISWR442',0,1,['Algoritmos',49]],
  [4,3,3,1.5,120,7.5,'FT','ISWR453',0,0,['Estructura de Datos',90]],
  [5,4,2,4,160,10,'PP','ISWR464',0,0,['Bases de Datos Distribuídas',135]],
  [6,3,3,1.5,120,7.5,'PP','ISWR473',0,0,['Redes de Computadores',121]]],
 [[0,4,2,4,160,10,'','',0,1,['Modelamiento y Diseño de',122],['Software',44]],
  [1,4,2,4,160,10,'','',0,1,['Ingeniería de Requerimientos',134]],
  [2,3,3,1.5,120,7.5,'','',0,0,['Gestión de la Configuración de',139],['Software',44]],
  [3,2,2,1,80,5,'','',0,0,['Interacción Humano Computador',153]],
  [4,3,1,3.5,120,7.5,'','',0,1,['Fundamentos de Sistemas de Información',190]],
  [5,4,2,4,160,10,'','',0,1,['Tecnologías de Seguridad',117]]]];

const px = a => a.map(v => v + 'px').join(' ');
let html = '';
data.forEach((list, r) => {
  const [y0, y1, y2, y3, y4] = rows[r];
  for (const [c, cd, cp, aa, h, cr, type, code, yellow, dark, ...lines] of list) {
    const [x0, a, b, d, x1] = cols[c];
    const name = lines.map(([t, w]) => `<span data-w="${w}">${t}</span>`).join('');
    html += `<div class="absolute bg-black p-[2px] text-center" style="left:${x0}px;top:${y0}px;width:${x1 - x0}px;height:${y4 - y0}px">
      <div class="w-full h-full grid gap-px overflow-hidden" style="grid-template-columns:${px([a - x0 - 2, b - a - 1, d - b - 1, x1 - d - 3])};grid-template-rows:${px([y1 - y0 - 2, y2 - y1 - 1, y3 - y2 - 1, y4 - y3 - 3])}">
      <div class="bg-[#f0f0f0] flex items-center justify-center">cd</div><div class="bg-[#fde9d9] text-black flex items-center justify-center">cp</div><div class="bg-[#ebf1de] text-black flex items-center justify-center">aa</div><div class="bg-[#e4dfec] flex items-center justify-center">${h}</div>
      <div class="bg-[#f0f0f0] flex items-center justify-center">${cd}</div><div class="bg-[#fde9d9] flex items-center justify-center">${cp}</div><div class="bg-[#ebf1de] text-black flex items-center justify-center">${aa}</div><div class="bg-[#e4dfec] flex items-center justify-center">${cr}</div>
      <div class="col-span-4 min-h-0 overflow-hidden bg-white flex flex-col items-center justify-center text-[12px] leading-[14.5px] ${dark ? 'text-black' : ''}">${name}</div>
      <div class="bg-white border-r border-black flex items-center pl-px text-[11.5px]">${type}</div>
      <div class="col-span-3 ${yellow ? 'bg-[#ffff00]' : 'bg-[#0070c0] text-[#e3eef8]'} flex items-center justify-center">${code ? `<span data-w="${code[0] === 'M' || code[0] === 'A' ? 47 : code[0] === 'F' ? 39 : 44}">${code}</span>` : ''}</div>
      </div></div>`;
  }
});
[[454,512],[577,632],[700,757],[814,868],[934,1006]].forEach(([t, b], i) => {
  html += `<div class="absolute left-[206px] w-[88px] border-2 border-black bg-[#ffc000] text-[#333] flex items-center justify-center text-[23px] pb-px" style="top:${t}px;height:${b - t}px">${i + 1}</div>`;
});
[[511,532],[630,660],[755,775],[866,888]].forEach(([t, b]) => {
  html += `<div class="absolute left-[1771px] w-[108px] border-2 border-black bg-[#fac090] text-[#333] flex items-center justify-center text-[15px] leading-[16px] font-bold" style="top:${t}px;height:${b - t}px"><span data-w="24">800</span></div>`;
});
const G = '#76933c', O = '#e46c0a';
const wires = [
 [G,'M388 532V560'],['#4a4a2c','M498 491.500H479V855H463'],
 [O,'M803 532V541M576.500 560V541.500H1023.500V532'],
 [G,'M839.500 529V550M775.500 561V551H1052.500V532'],
 [G,'M1249 532V560M1284 531V549.500H1508V560'],[O,'M1548 476H1564V743H1580'],[O,'M1189 660V683'],
 [G,'M1234 774V797M1007 797V780H1234'],[O,'M1466.500 774V797M781.500 799V789H1466'],[O,'M1671 774V797'],
 [O,'M1102 863.500L1124.500 864.500V990'],
 [G,'M789 888V902M790 902V916M382 916V902.500H1025V916M578 902V916'],
 [G,'M1224.500 916V901H1623.500V887M1464.500 885V901'],[O,'M1669.500 887V910H1455.500V917']];
html += `<svg class="absolute left-0 top-0 w-[1900px] h-[1100px]" viewBox="0 0 1900 1100" fill="none" stroke-width="3.600">` +
  wires.map(([c, d]) => `<path stroke="${c}" d="${d}"/>`).join('') +
  `<path d="M382 902.500H790M789 888V902" stroke="${G}" stroke-width="4.600"/><path d="M868 472H884Q889 472 889 476V739Q889 742 885 742L868 743" stroke="#1f1d14" stroke-width="4"/>
  <path d="M1339 739H1374" stroke="#c27c7c" stroke-width="4"/><circle cx="1339.500" cy="739" r="5" fill="#953735"/><circle cx="1374" cy="739" r="5" fill="#953735"/></svg>`;
document.getElementById('layer').insertAdjacentHTML('beforeend', html);

// Condense each label to its set width; the 1px-high svg rests on the text baseline.
document.querySelectorAll('[data-w]').forEach(e => {
  const w = e.dataset.w, t = e.textContent;
  e.innerHTML = `<svg class="inline align-baseline overflow-visible" width="${w}" height="1"><text y="1" fill="currentColor" textLength="${w}" lengthAdjust="spacingAndGlyphs">${t}</text></svg>`;
});
</script>
</body>
</html>
